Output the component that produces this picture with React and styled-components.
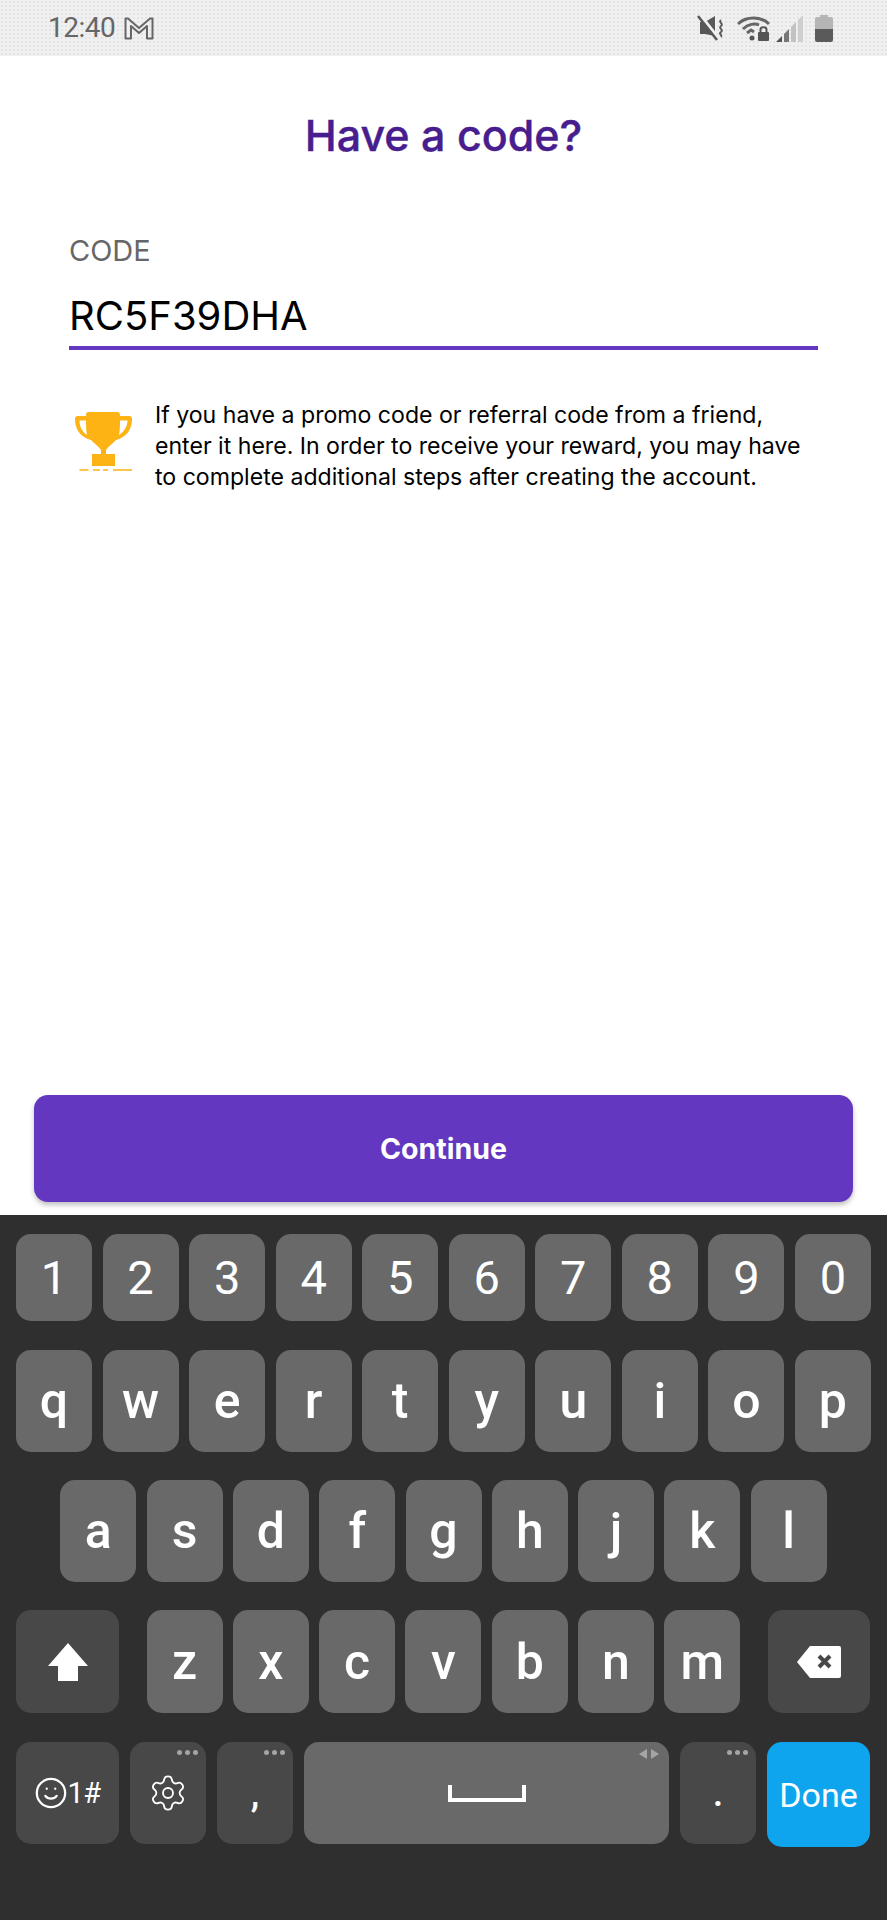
import styled, { createGlobalStyle } from 'styled-components'
import { Settings, Smile } from 'lucide-react'

const Global = createGlobalStyle`
  html, body { margin: 0; padding: 0; background: #fff; }
  * { box-sizing: border-box; }
`

const Page = styled.div`
  width: 887px;
  height: 1920px;
  display: flex;
  flex-direction: column;
  font-family: Inter, "Open Sans", sans-serif;
  overflow: hidden;
`

const StatusBar = styled.div`
  height: 56px;
  flex: none;
  display: flex;
  align-items: center;
  padding: 0 54px 0 48px;
  background-color: #f0f0f0;
  background-image: radial-gradient(#e4e4e4 1px, transparent 1px);
  background-size: 4px 4px;
  color: #666;
`

const Clock = styled.span`
  font-family: Roboto, sans-serif;
  font-size: 28px;
  letter-spacing: -0.5px;
  line-height: 56px;
`

const StatusLeft = styled.div`
  display: flex;
  align-items: center;
  gap: 9px;
`

const StatusRight = styled.div`
  margin-left: auto;
  display: flex;
  align-items: center;
  svg { display: block; }
`

const Main = styled.main`
  flex: 1;
  padding: 54px 69px 0;
  display: flex;
  flex-direction: column;
`

const Title = styled.h1`
  margin: 0 0 74px;
  font-size: 43px;
  line-height: 50px;
  font-weight: 500;
  -webkit-text-stroke: 0.4px #481d8e;
  color: #481d8e;
  text-align: center;
`

const Label = styled.div`
  font-size: 29px;
  line-height: 34px;
  color: #666;
`

const CodeValue = styled.div`
  margin-top: 24px;
  padding-bottom: 6px;
  height: 58px;
  font-size: 40px;
  line-height: 48px;
  color: #000;
  border-bottom: 4px solid #6437c0;
`

const Hint = styled.div`
  margin-top: 50px;
  display: flex;
  align-items: flex-start;
  gap: 23px;
  padding-left: 6px;
`

const HintText = styled.p`
  margin: 0;
  font-size: 23.1px;
  line-height: 31px;
  color: #000;
  white-space: nowrap;
`

const Trophy = styled.svg`
  flex: none;
  width: 57px;
  height: 60px;
  margin-top: 12px;
`

const ContinueButton = styled.button`
  flex: none;
  height: 107px;
  margin: 0 34px 13px;
  border: 0;
  border-radius: 14px;
  background: #6437c0;
  color: #fff;
  font-family: inherit;
  font-size: 28.5px;
  font-weight: 700;
  box-shadow: 0 3px 5px rgba(0, 0, 0, 0.25);
`

const Keyboard = styled.div`
  flex: none;
  height: 705px;
  background: #2f2f2f;
  padding: 19px 16px 0;
  display: flex;
  flex-direction: column;
  font-family: Roboto, sans-serif;
  color: #fff;
`

const Row = styled.div`
  display: flex;
  align-items: flex-start;
  justify-content: ${p => p.$justify || 'space-between'};
  gap: ${p => p.$gap || 0}px;
  margin-top: ${p => p.$top || 0}px;
`

const KeyGroup = styled.div`
  display: flex;
  gap: 10.3px;
`

const Key = styled.div`
  position: relative;
  flex: none;
  width: ${p => p.$w || 76}px;
  height: ${p => p.$h || 102}px;
  border-radius: 15px;
  background: ${p => p.$bg || '#696969'};
  display: flex;
  align-items: center;
  justify-content: center;
  font-size: ${p => p.$size || 50}px;
  font-weight: ${p => p.$weight || 500};
  line-height: 1;
`

const Dots = styled.span`
  position: absolute;
  top: 8px;
  right: 8px;
  display: flex;
  gap: 3px;
  i {
    width: 5px;
    height: 5px;
    border-radius: 50%;
    background: #a5a5a5;
  }
`

const Arrows = styled.svg`
  position: absolute;
  top: 7px;
  right: 10px;
`

const SymbolLabel = styled.span`
  display: flex;
  align-items: center;
  font-size: 29px;
  font-weight: 400;
  letter-spacing: -0.5px;
  svg { margin-right: -1px; }
`

const numbers = '1234567890'.split('')
const topRow = 'qwertyuiop'.split('')
const middleRow = 'asdfghjkl'.split('')
const bottomRow = 'zxcvbnm'.split('')
const dark = '#484848'

function GmailIcon() {
  return (
    <svg width="30" height="23" viewBox="0 0 30 23" fill="none" stroke="#666" strokeWidth="2">
      <path d="M1.500 21.500V1.500H4L15 11L26 1.500H28.500V21.500H23V9L15 16L7 9V21.500Z" strokeLinejoin="round" />
    </svg>
  )
}

function StatusIcons() {
  return (
    <StatusRight>
      {/* mute */}
      <svg width="28" height="26" viewBox="0 0 28 26">
        <path d="M3 7H8L18 1V21L8 19H3Z" fill="#585858" />
        <path d="M3.500 0L22.500 24.500" stroke="#f0f0f0" strokeWidth="3" />
        <path d="M1 1L20 25" stroke="#585858" strokeWidth="2.500" />
        <path d="M24 5C21 7 27 9 24 11C21 13 27 15 24 17C21 19 26 20 24 22" fill="none" stroke="#585858" strokeWidth="2" />
      </svg>
      {/* wifi + lock */}
      <svg width="33" height="26" viewBox="0 0 33 26" style={{ marginLeft: 12 }} fill="none">
        <path d="M1 9C9 1 24 1 32 9" stroke="#666" strokeWidth="3" />
        <path d="M6 14C11 9 18 8 22 10" stroke="#666" strokeWidth="3" />
        <path d="M10 18L14 15L17 17" stroke="#666" strokeWidth="3" />
        <circle cx="15" cy="23" r="2.500" fill="#555" />
        <rect x="21" y="17" width="11" height="9" rx="1" fill="#555" />
        <path d="M23.500 17V14.500C23.500 11.500 29.500 11.500 29.500 14.500V17" stroke="#555" strokeWidth="2" />
      </svg>
      {/* signal */}
      <svg width="28" height="27" viewBox="0 0 28 27" style={{ marginLeft: 6 }}>
        <path d="M0 27L6 21V27Z" fill="#555" />
        <path d="M8 19L13 14V27H8Z" fill="#777" />
        <path d="M15 12L20 7V27H15Z" fill="#c2c2c2" />
        <path d="M22 5L27 0V27H22Z" fill="#cfcfcf" />
      </svg>
      {/* battery */}
      <svg width="18" height="27" viewBox="0 0 18 27" style={{ marginLeft: 11 }}>
        <path d="M5 0H13V2H16Q18 2 18 4V14H0V4Q0 2 2 2H5Z" fill="#b5b5b5" />
        <path d="M0 14H18V25Q18 27 16 27H2Q0 27 0 25Z" fill="#5a5a5a" />
      </svg>
    </StatusRight>
  )
}

function TrophyIcon() {
  return (
    <Trophy viewBox="0 0 57 60">
      <path
        fill="#fdb314"
        fillRule="evenodd"
        d="M13 0H43Q45 0 45 4H54Q57 4 57 7C57 17 52 25 41 28C38 31 33 35 31 38V42H40V54H17V42H26V38C24 35 19 31 16 28C5 25 0 17 0 7Q0 4 3 4H11Q11 0 13 0ZM4.500 8.500C4.500 14 7 20 12 23C11 18 11 13 11 8.500ZM45 8.500C45 13 45 18 44 23C49 20 52.500 14 52.500 8.500Z"
      />
      <path d="M4.500 58H13.500M18 58H25M28 58H33M38 58H57" stroke="#fdb314" strokeWidth="1.600" />
    </Trophy>
  )
}

export default function App() {
  return (
    <Page>
      <Global />
      <StatusBar>
        <StatusLeft>
          <Clock>12:40</Clock>
          <GmailIcon />
        </StatusLeft>
        <StatusIcons />
      </StatusBar>

      <Main>
        <Title>Have a code?</Title>
        <Label>CODE</Label>
        <CodeValue>RC5F39DHA</CodeValue>
        <Hint>
          <TrophyIcon />
          <HintText>
            If you have a promo code or referral code from a friend,<br />
            enter it here. In order to receive your reward, you may have<br />
            to complete additional steps after creating the account.
          </HintText>
        </Hint>
      </Main>

      <ContinueButton>Continue</ContinueButton>

      <Keyboard>
        <Row>
          {numbers.map(n => <Key key={n} $h={87} $size={47} $weight={400}>{n}</Key>)}
        </Row>
        <Row $top={29}>
          {topRow.map(k => <Key key={k}>{k}</Key>)}
        </Row>
        <Row $top={28} $justify="center">
          <KeyGroup>
            {middleRow.map(k => <Key key={k}>{k}</Key>)}
          </KeyGroup>
        </Row>
        <Row $top={28} $gap={27.5} $justify="flex-start">
          <Key $w={103} $h={103} $bg={dark}>
            <svg width="40" height="38" viewBox="0 0 40 38">
              <path d="M20 0L40 23H30V38H10V23H0Z" fill="#fff" />
            </svg>
          </Key>
          <KeyGroup>
            {bottomRow.map(k => <Key key={k} $h={103}>{k}</Key>)}
          </KeyGroup>
          <Key $w={102} $h={103} $bg={dark}>
            <svg width="44" height="32" viewBox="0 0 44 32">
              <path d="M13 0H42Q44 0 44 2V30Q44 32 42 32H13L0 16Z" fill="#fff" />
              <path d="M22 10L33 21M33 10L22 21" stroke="#484848" strokeWidth="4" />
            </svg>
          </Key>
        </Row>
        <Row $top={29} $gap={11} $justify="flex-start">
          <Key $w={103} $bg={dark}>
            <SymbolLabel>
              <Smile size={34} strokeWidth={1.600} />1#
            </SymbolLabel>
          </Key>
          <Key $bg={dark}>
            <Settings size={40} strokeWidth={1.100} />
            <Dots><i /><i /><i /></Dots>
          </Key>
          <Key $bg={dark} $size={38}>
            ,
            <Dots><i /><i /><i /></Dots>
          </Key>
          <Key $w={365}>
            <svg width="78" height="17" viewBox="0 0 78 17">
              <path d="M2 0V15H76V0" fill="none" stroke="#fff" strokeWidth="4" />
            </svg>
            <Arrows width="20" height="10" viewBox="0 0 20 10">
              <path d="M8 0V10L0 5Z M12 0V10L20 5Z" fill="#a5a5a5" />
            </Arrows>
          </Key>
          <Key $bg={dark} $size={38}>
            .
            <Dots><i /><i /><i /></Dots>
          </Key>
          <Key $w={103} $h={105} $bg="#0ea5ee" $size={34} $weight={400}>Done</Key>
        </Row>
      </Keyboard>
    </Page>
  )
}
